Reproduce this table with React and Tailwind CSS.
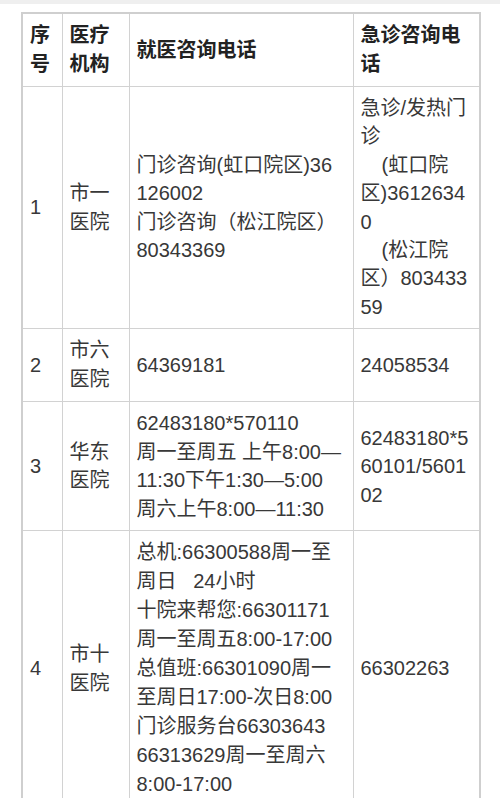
import React from 'react';

const rows = [
  {
    no: '1',
    name: ['市一', '医院'],
    phone: ['门诊咨询(虹口院区)36', '126002', '门诊咨询（松江院区）', '80343369'],
    emergency: ['急诊/发热门', '诊', { indent: true, text: '(虹口院' }, '区)3612634', '0', { indent: true, text: '(松江院' }, '区）803433', '59'],
    lh: 'leading-[28.4px]',
  },
  {
    no: '2',
    name: ['市六', '医院'],
    phone: ['64369181'],
    emergency: ['24058534'],
    lh: '',
  },
  {
    no: '3',
    name: ['华东', '医院'],
    phone: ['62483180*570110', '周一至周五 上午8:00—', '11:30下午1:30—5:00', '周六上午8:00—11:30'],
    emergency: ['62483180*5', '60101/5601', '02'],
    lh: 'leading-[28.5px]',
  },
  {
    no: '4',
    name: ['市十', '医院'],
    phone: [
      '总机:66300588周一至',
      '周日\u00a0\u00a0\u00a024小时',
      '十院来帮您:66301171',
      '周一至周五8:00-17:00',
      '总值班:66301090周一',
      '至周日17:00-次日8:00',
      '门诊服务台66303643',
      '66313629周一至周六',
      '8:00-17:00',
    ],
    emergency: ['66302263'],
    lh: '',
  },
];

const Lines = ({ lines }) => (
  <>
    {lines.map((line, i) =>
      typeof line === 'string' ? (
        <div key={i} className="whitespace-nowrap">{line}</div>
      ) : (
        <div key={i} className="whitespace-nowrap pl-[21px]">{line.text}</div>
      )
    )}
  </>
);

const App = () => {
  const cell = 'border border-[#d2d2d2] px-[7px] py-[7px] align-middle text-left';

  return (
    <div
      className="min-h-screen bg-white text-[#383838] text-[20px] leading-[29px]"
      style={{ fontFamily: '"Liberation Sans", "Noto Sans CJK SC", sans-serif' }}
    >
      <div className="h-[4px] bg-[#efefef]" />
      <div className="pt-[8px] pl-[21px]">
        <table className="table-fixed border-collapse border-2 border-[#cfcfcf] w-[458px]">
          <colgroup>
            <col className="w-[40px]" />
            <col className="w-[67px]" />
            <col className="w-[224px]" />
            <col className="w-[127px]" />
          </colgroup>
          <thead>
            <tr className="text-[#222]">
              <th className={cell + ' font-bold'}>
                <Lines lines={['序', '号']} />
              </th>
              <th className={cell + ' font-bold'}>
                <Lines lines={['医疗', '机构']} />
              </th>
              <th className={cell + ' font-bold'}>就医咨询电话</th>
              <th className={cell + ' font-bold'}>
                <Lines lines={['急诊咨询电', '话']} />
              </th>
            </tr>
          </thead>
          <tbody>
            {rows.map((row) => (
              <tr key={row.no} className={row.lh}>
                <td className={cell}>{row.no}</td>
                <td className={cell}>
                  <Lines lines={row.name} />
                </td>
                <td className={cell}>
                  <Lines lines={row.phone} />
                </td>
                <td className={cell}>
                  <Lines lines={row.emergency} />
                </td>
              </tr>
            ))}
          </tbody>
        </table>
      </div>
    </div>
  );
};

export default App;
